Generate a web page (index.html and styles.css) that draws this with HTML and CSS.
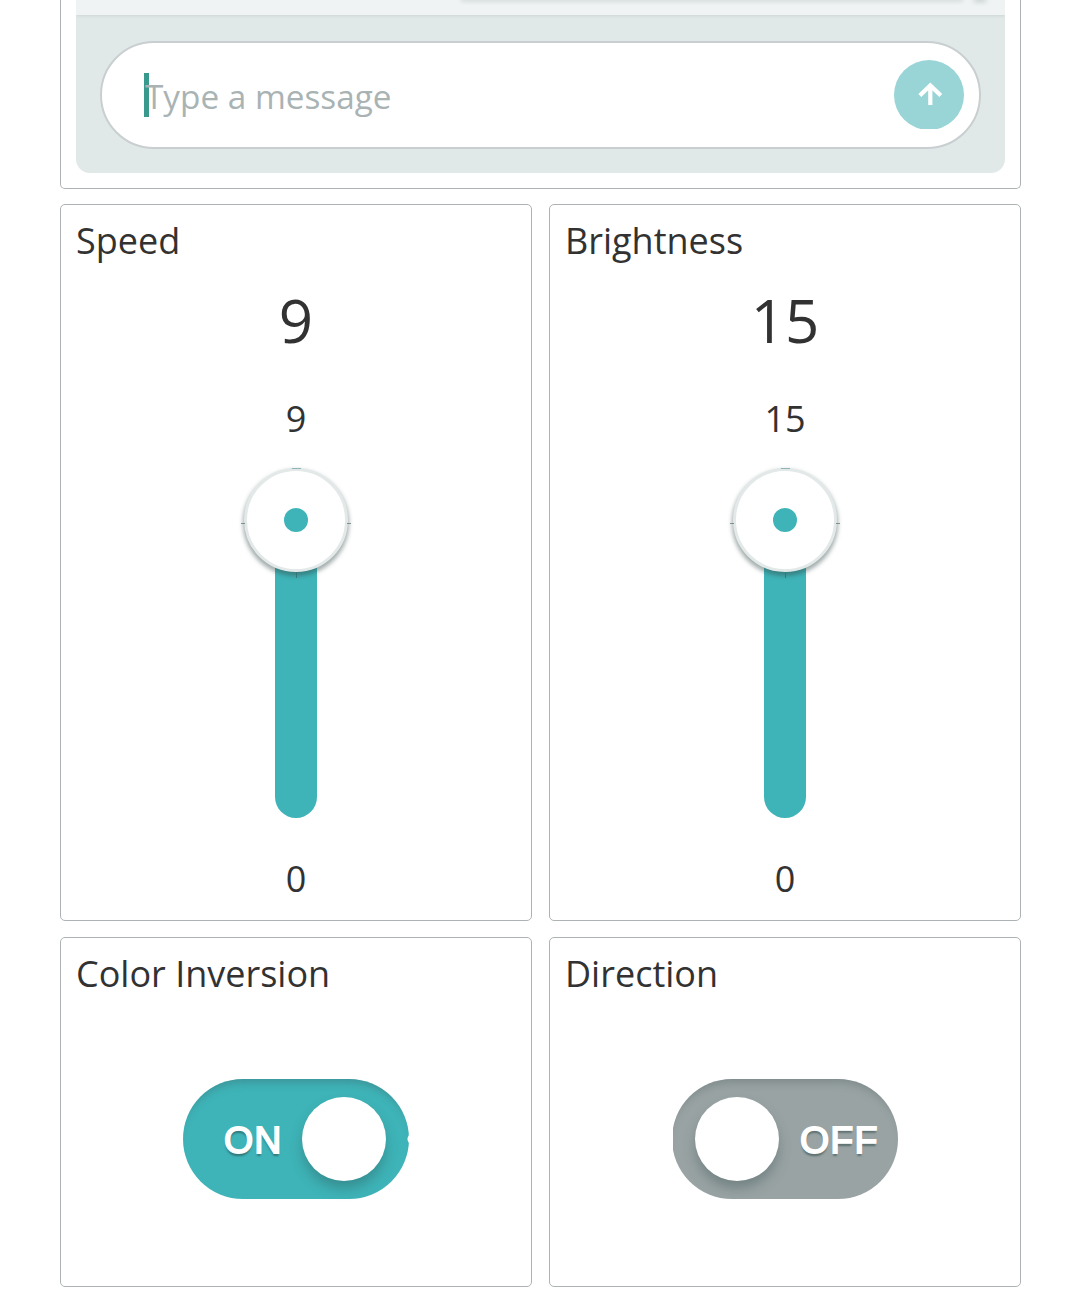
FILE: index.html
```html
<!DOCTYPE html>
<html lang="en">
<head>
<meta charset="utf-8">
<title>Device controls</title>
<link rel="stylesheet" href="styles.css">
</head>
<body>
<main class="dashboard">
  <section class="card terminal">
    <div class="terminal-panel">
      <div class="messages"><div class="bubble"></div><div class="bubble-tail"></div></div>
      <div class="composer">
        <div class="message-field">
          <span class="caret"></span>
          <span class="placeholder">Type a message</span>
          <div class="send">
            <svg width="26" height="26" viewBox="0 0 26 26" fill="none" stroke="#fff" stroke-width="4.2"><path d="M14.3 23V3.6M3.8 13.5 14.3 3.4 24.8 13.5"/></svg>
          </div>
        </div>
      </div>
    </div>
  </section>
  <section class="card slider-card">
    <h2 class="title">Speed</h2>
    <div class="value">9</div>
    <div class="limit">9</div>
    <div class="slider"><div class="track"></div><div class="knob"></div></div>
    <div class="limit limit-min">0</div>
  </section>
  <section class="card slider-card">
    <h2 class="title">Brightness</h2>
    <div class="value">15</div>
    <div class="limit">15</div>
    <div class="slider"><div class="track"></div><div class="knob"></div></div>
    <div class="limit limit-min">0</div>
  </section>
  <section class="card switch-card">
    <h2 class="title">Color Inversion</h2>
    <div class="switch switch-on"><span class="switch-label">ON</span><span class="thumb"></span></div>
  </section>
  <section class="card switch-card">
    <h2 class="title">Direction</h2>
    <div class="switch switch-off"><span class="thumb"></span><span class="switch-label">OFF</span></div>
  </section>
</main>
</body>
</html>
```
FILE: styles.css
```css
* { box-sizing: border-box; }
body {
  margin: 0;
  height: 1306px;
  overflow: hidden;
  background: #fff;
  color: #323232;
  font-family: "Open Sans", "Noto Sans", sans-serif;
}
.dashboard {
  display: grid;
  grid-template-columns: 472px 472px;
  grid-template-rows: 189px 718px 350px;
  gap: 15px 17px;
  padding-left: 60px;
}
.card {
  border: 1px solid #adb3b4;
  border-radius: 5px;
  padding: 0 15px;
  min-width: 0;
}
.slider-card { margin-bottom: 1px; }
.terminal {
  grid-column: 1 / 3;
  border-top: 0;
  border-radius: 0 0 5px 5px;
}
.terminal-panel {
  height: 173px;
  border-radius: 0 0 14px 14px;
  background: #e1e9e8;
  overflow: hidden;
}
.messages {
  display: flex;
  height: 15px;
  background: #eff3f4;
  box-shadow: 0 1px 3px #cdd6d6;
  padding-left: 386px;
}
.bubble {
  width: 500px;
  height: 0;
  box-shadow: 0 0 4px 1px #bcc3c3;
}
.bubble-tail {
  width: 8px;
  height: 0;
  margin-left: 14px;
  box-shadow: 0 0 5px 2px #c3cacb;
}
.composer { padding: 26px 24px 24px; }
.message-field {
  display: flex;
  align-items: center;
  height: 108px;
  padding: 0 15px 0 42px;
  border: 2px solid #c9cfd0;
  border-radius: 54px;
  background: #fff;
}
.caret {
  width: 5px;
  height: 44px;
  margin-right: -5px;
  background: #39998c;
}
.placeholder {
  flex: 1;
  padding: 1px 0 0 1px;
  font-size: 33.3px;
  line-height: 46px;
  color: #a9b3b4;
}
.send {
  display: flex;
  align-items: center;
  justify-content: center;
  width: 70px;
  height: 70px;
  border-radius: 50%;
  background: #99d4d7;
  clip-path: inset(0 0 1px);
}
.title {
  margin: 0;
  padding-top: 11px;
  font-size: 36px;
  font-weight: 400;
  line-height: 49px;
}
.value {
  height: 82px;
  margin-top: 14px;
  font-size: 60px;
  line-height: 82px;
  text-align: center;
}
.limit {
  margin-top: 33px;
  height: 50px;
  font-size: 36px;
  line-height: 50px;
  text-align: center;
}
.limit-min { margin-top: 36px; }
.slider {
  display: grid;
  justify-items: center;
  height: 350px;
  margin-top: 24px;
}
.track, .knob { grid-area: 1 / 1; }
.track {
  width: 42px;
  height: 350px;
  border-radius: 21px;
  background: #3eb4b8;
}
.knob {
  position: relative;
  display: flex;
  width: 104px;
  height: 104px;
  border: 3px solid #e2e9e8;
  border-radius: 50%;
  background: #fff;
  box-shadow: 0 3px 4px 1px rgba(50, 70, 70, .45);
}
.knob::before {
  content: "";
  width: 24px;
  height: 24px;
  margin: auto;
  border-radius: 50%;
  background: #3eb4b8;
}
/* Hairline ticks at the four quadrant points of the knob */
.knob::after {
  content: "";
  position: absolute;
  inset: -3px -6px -9px;
  background:
    linear-gradient(#7e9092, #7e9092) 0 55px / 4px 1px,
    linear-gradient(#7e9092, #7e9092) 100% 55px / 4px 1px,
    linear-gradient(#8fb5b8, #8fb5b8) 50% 0 / 9px 1px,
    linear-gradient(#38757a, #38757a) 50% 100% / 1px 6px;
  background-repeat: no-repeat;
}
.switch {
  display: flex;
  align-items: center;
  width: 226px;
  height: 120px;
  margin: 81px auto 0;
  border-radius: 60px;
}
.switch-on {
  padding-left: 41px;
  gap: 20px;
  background: radial-gradient(circle at 230px 60px, #fff 5px, #3eb4b8 6px);
  box-shadow: inset 0 11px 10px -8px rgba(60, 90, 95, .4);
}
.switch-off {
  padding-left: 23px;
  gap: 21px;
  background: #99a3a4;
  box-shadow: inset 0 11px 10px -8px rgba(80, 95, 95, .4);
  clip-path: inset(0 0 0 1px);
}
.thumb {
  width: 84px;
  height: 84px;
  border-radius: 50%;
  background: #fff;
  box-shadow: 0 8px 13px -1px rgba(40, 65, 65, .35);
}
.switch-label {
  padding-top: 2px;
  font: 400 37.5px/46px "Liberation Sans", Arial, sans-serif;
  letter-spacing: 1.2px;
  color: #fff;
  -webkit-text-stroke: 1.8px #fff;
  text-shadow: 0 3px 2px rgba(40, 65, 65, .55);
}
.switch-on .switch-label { width: 58px; }
```
